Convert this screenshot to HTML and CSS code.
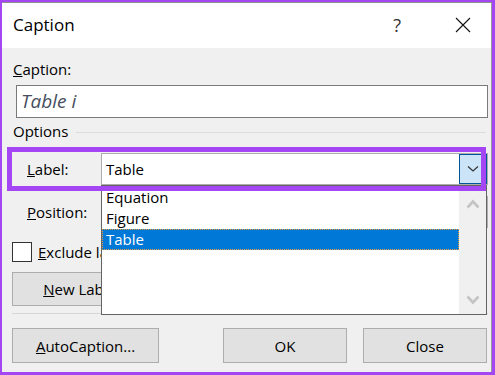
FILE: index.html
```html
<!DOCTYPE html>
<html lang="en">
  <head>
    <meta charset="UTF-8" />
    <title>Caption</title>
    <link rel="stylesheet" href="styles.css">
  </head>
  <body>
    <div class="dialog">
      <div class="titlebar">
        <span class="title">Caption</span>
        <span class="help">?</span>
        <svg class="close" width="16" height="16" viewBox="0 0 16 16">
          <path d="M1 1 L15 15 M15 1 L1 15" stroke="#111" stroke-width="1.1" fill="none" />
        </svg>
      </div>
      <div class="content">
        <div class="field-label"><u>C</u>aption:</div>
        <div class="caption-input">Table i</div>
        <div class="group-title">
          <span>Options</span>
          <span class="group-line"></span>
        </div>
        <div class="option-row label-row">
          <span class="row-label"><u>L</u>abel:</span>
          <div class="combo">
            <span class="combo-text">Table</span>
            <span class="combo-btn">
              <svg width="12" height="8" viewBox="0 0 12 8">
                <path d="M1 1.5 L6 6 L11 1.5" stroke="#333" stroke-width="1.2" fill="none" />
              </svg>
            </span>
          </div>
        </div>
        <div class="option-row position-row">
          <span class="row-label"><u>P</u>osition:</span>
          <div class="combo"></div>
        </div>
        <div class="check-row">
          <span class="checkbox"></span>
          <span class="check-text"><u>E</u>xclude label from caption</span>
        </div>
        <div class="button-row">
          <button class="btn wide"><u>N</u>ew Label...</button>
        </div>
        <div class="separator"></div>
        <div class="footer">
          <button class="btn wide auto"><u>A</u>utoCaption...</button>
          <button class="btn">OK</button>
          <button class="btn">Close</button>
        </div>

        <div class="dropdown">
          <ul class="dropdown-items">
            <li>Equation</li>
            <li>Figure</li>
            <li class="selected">Table</li>
          </ul>
          <div class="scrollbar">
            <svg width="14" height="10" viewBox="0 0 14 10">
              <path d="M1.5 8.5 L7 2.5 L12.5 8.5" stroke="#c4c4c4" stroke-width="2.6" fill="none" />
            </svg>
            <svg width="14" height="10" viewBox="0 0 14 10">
              <path d="M1.5 1.5 L7 7.5 L12.5 1.5" stroke="#c4c4c4" stroke-width="2.6" fill="none" />
            </svg>
          </div>
        </div>
        <div class="highlight"></div>
      </div>
    </div>
  </body>
</html>
```

FILE: styles.css
```css
* {
  margin: 0;
  padding: 0;
  box-sizing: border-box;
}
body {
  background-color: #a546f4;
  padding: 2px 3px 3px 2px;
  font-family: 'Open Sans', sans-serif;
  font-size: 15px;
  color: #000;
  height: 375px;
  overflow: hidden;
}
.dialog {
  height: 370px;
  background: #f0f0f0;
  border-top: 1px solid #8f8f8f;
  border-right: 1px solid #9a9a9a;
  display: flex;
  flex-direction: column;
}
.titlebar {
  height: 45px;
  background: #fff;
  display: flex;
  align-items: center;
  padding-left: 11px;
}
.title {
  font-size: 17px;
  flex: 1;
  margin-top: -2px;
}
.help {
  font-size: 18px;
  color: #333;
  margin-right: 54px;
  margin-top: -2px;
}
.close {
  margin-right: 20px;
  margin-top: -2px;
}
.content {
  position: relative;
  flex: 1;
  padding: 0 3px 0 10px;
  display: flex;
  flex-direction: column;
}
.field-label {
  margin-top: 11px;
  line-height: 20px;
  padding-left: 1px;
}
.caption-input {
  margin-top: 6px;
  margin-left: 4px;
  height: 33px;
  background: #fff;
  border: 1px solid #7a7a7a;
  font-style: italic;
  font-size: 19px;
  color: #464e5e;
  padding-left: 4px;
  line-height: 30px;
}
.group-title {
  margin-top: 3px;
  height: 20px;
  display: flex;
  align-items: center;
  padding-left: 1px;
}
.group-line {
  flex: 1;
  height: 1px;
  background: #dcdcdc;
  margin: 3px 2px 0 8px;
}
.option-row {
  display: flex;
  align-items: center;
  height: 32px;
}
.label-row {
  margin-top: 12px;
}
.position-row {
  margin-top: 11px;
}
.row-label {
  width: 89px;
  padding-left: 15px;
}
.combo {
  flex: 1;
  height: 100%;
  background: #fff;
  border: 1px solid #adadad;
  display: flex;
  align-items: center;
}
.combo-text {
  flex: 1;
  padding-left: 4px;
}
.combo-btn {
  width: 28px;
  height: 100%;
  background: #cce4f7;
  border: 1px solid #005499;
  display: flex;
  align-items: center;
  justify-content: center;
}
.check-row {
  margin-top: 14px;
  height: 20px;
  display: flex;
  align-items: center;
  gap: 6px;
}
.checkbox {
  width: 20px;
  height: 20px;
  background: #fff;
  border: 1px solid #333;
}
.check-text {
  width: 66px;
  overflow: hidden;
  white-space: nowrap;
}
.button-row {
  margin-top: 10px;
  display: flex;
  gap: 16px;
}
.btn {
  font-family: inherit;
  font-size: 15px;
  color: #000;
  height: 35px;
  width: 124px;
  background: #e1e1e1;
  border: 1px solid #adadad;
}
.btn.wide {
  width: 147px;
}
.button-row .btn {
  height: 34px;
}
.separator {
  margin-top: 7px;
  height: 1px;
  background: #d6d6d6;
}
.footer {
  margin-top: 14px;
  margin-right: 1px;
  display: flex;
  gap: 16px;
}
.footer .auto {
  margin-right: auto;
}
.dropdown {
  position: absolute;
  left: 99px;
  top: 137px;
  width: 386px;
  height: 130px;
  background: #fff;
  border: 1px solid #646464;
  display: flex;
}
.dropdown-items {
  flex: 1;
  list-style: none;
  padding-top: 1px;
}
.dropdown-items li {
  height: 21px;
  line-height: 21px;
  padding-left: 4px;
}
.dropdown-items .selected {
  background: #0078d7;
  color: #fff;
  outline: 1px dotted #e9a23b;
  outline-offset: -1px;
}
.scrollbar {
  width: 27px;
  background: #f0f0f0;
  display: flex;
  flex-direction: column;
  justify-content: space-between;
  align-items: center;
  padding: 13px 0 9px;
}
.highlight {
  position: absolute;
  left: 5px;
  top: 99px;
  width: 479px;
  height: 44px;
  border: 5px solid #a546f4;
}
```
